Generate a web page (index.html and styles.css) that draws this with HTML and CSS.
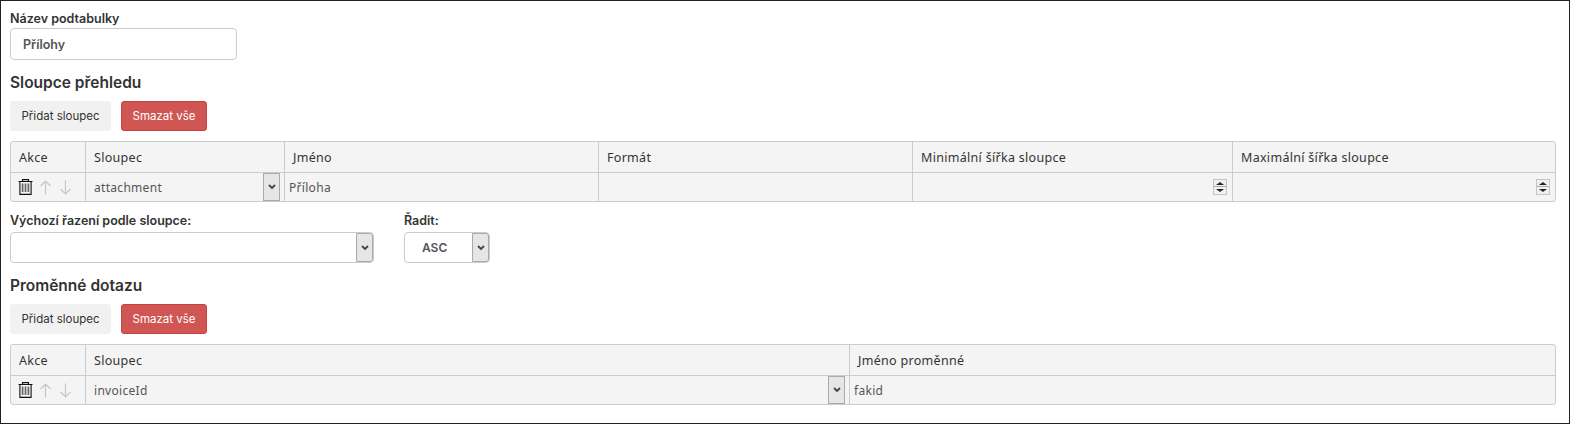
FILE: index.html
```html
<!DOCTYPE html>
<html lang="cs">
<head>
    <meta charset="UTF-8">
    <title>Podtabulka</title>
    <link rel="stylesheet" href="styles.css">
</head>
<body>
    <div class="frame">
        <label class="field-label">Název podtabulky</label>
        <input class="name-input" type="text" value="Přílohy">

        <h2>Sloupce přehledu</h2>
        <div class="buttons">
            <button class="btn">Přidat sloupec</button>
            <button class="btn btn-danger">Smazat vše</button>
        </div>

        <table class="grid grid-columns">
            <tr>
                <th class="col-actions">Akce</th>
                <th class="col-source">Sloupec</th>
                <th class="col-name">Jméno</th>
                <th class="col-format">Formát</th>
                <th class="col-min">Minimální šířka sloupce</th>
                <th>Maximální šířka sloupce</th>
            </tr>
            <tr>
                <td class="actions">
                    <div class="action-icons">
                        <svg class="icon-trash" width="15" height="16" viewBox="0 0 15 16"><path d="M.5 2.500h14M4.500 2.500V.6h6v1.900M1.900 2.500V15.400h11.200V2.500" fill="none" stroke="#111" stroke-width="1.100"/><path d="M4.600 4.500v8.500M7.500 4.500v8.500M10.400 4.500v8.500" fill="none" stroke="#666" stroke-width="1.700"/></svg>
                        <svg class="icon-arrow" width="11" height="15" viewBox="0 0 11 15"><path d="M5.500 14.500V1M.5 6 5.500 1l5 5" fill="none" stroke="#c6c6c6" stroke-width="1.200"/></svg>
                        <svg class="icon-arrow" width="11" height="15" viewBox="0 0 11 15"><path d="M5.500 .5V14M.5 9l5 5 5-5" fill="none" stroke="#c6c6c6" stroke-width="1.200"/></svg>
                    </div>
                </td>
                <td class="has-select">attachment<span class="arrow-box"><svg width="8" height="6" viewBox="0 0 8 6"><path d="M1 1l3 3 3-3" fill="none" stroke="#444" stroke-width="1.800"/></svg></span></td>
                <td class="small-pad">Příloha</td>
                <td></td>
                <td class="has-spin"><span class="spin"><i class="up"></i><i class="down"></i></span></td>
                <td class="has-spin"><span class="spin"><i class="up"></i><i class="down"></i></span></td>
            </tr>
        </table>

        <div class="sort-row">
            <div class="sort-col">
                <label class="field-label">Výchozí řazení podle sloupce:</label>
                <div class="select select-wide"><span class="arrow-box"><svg width="8" height="6" viewBox="0 0 8 6"><path d="M1 1l3 3 3-3" fill="none" stroke="#444" stroke-width="1.800"/></svg></span></div>
            </div>
            <div class="sort-col">
                <label class="field-label">Řadit:</label>
                <div class="select select-order">ASC<span class="arrow-box"><svg width="8" height="6" viewBox="0 0 8 6"><path d="M1 1l3 3 3-3" fill="none" stroke="#444" stroke-width="1.800"/></svg></span></div>
            </div>
        </div>

        <h2>Proměnné dotazu</h2>
        <div class="buttons">
            <button class="btn">Přidat sloupec</button>
            <button class="btn btn-danger">Smazat vše</button>
        </div>

        <table class="grid">
            <tr>
                <th class="col-actions">Akce</th>
                <th class="col-query">Sloupec</th>
                <th>Jméno proměnné</th>
            </tr>
            <tr>
                <td class="actions">
                    <div class="action-icons">
                        <svg class="icon-trash" width="15" height="16" viewBox="0 0 15 16"><path d="M.5 2.500h14M4.500 2.500V.6h6v1.900M1.900 2.500V15.400h11.200V2.500" fill="none" stroke="#111" stroke-width="1.100"/><path d="M4.600 4.500v8.500M7.500 4.500v8.500M10.400 4.500v8.500" fill="none" stroke="#666" stroke-width="1.700"/></svg>
                        <svg class="icon-arrow" width="11" height="15" viewBox="0 0 11 15"><path d="M5.500 14.500V1M.5 6 5.500 1l5 5" fill="none" stroke="#c6c6c6" stroke-width="1.200"/></svg>
                        <svg class="icon-arrow" width="11" height="15" viewBox="0 0 11 15"><path d="M5.500 .5V14M.5 9l5 5 5-5" fill="none" stroke="#c6c6c6" stroke-width="1.200"/></svg>
                    </div>
                </td>
                <td class="has-select">invoiceId<span class="arrow-box"><svg width="8" height="6" viewBox="0 0 8 6"><path d="M1 1l3 3 3-3" fill="none" stroke="#444" stroke-width="1.800"/></svg></span></td>
                <td class="small-pad">fakid</td>
            </tr>
        </table>
    </div>
</body>
</html>
```

FILE: styles.css
```css
body {
    margin: 0;
    background: #fff;
    font-family: 'Inter', 'Liberation Sans', sans-serif;
    color: #333;
}
.frame {
    box-sizing: border-box;
    width: 1570px;
    height: 424px;
    border: 1px solid #222;
    padding: 10px 13px 0 9px;
}
.field-label {
    display: block;
    font-size: 12.5px;
    font-weight: 600;
    line-height: 16px;
    color: #333;
}
.name-input {
    display: block;
    box-sizing: border-box;
    width: 227px;
    height: 32px;
    margin-top: 1px;
    padding: 0 12px;
    border: 1px solid #ccc;
    border-radius: 4px;
    font-family: inherit;
    font-size: 12.5px;
    font-weight: 600;
    color: #555;
}
h2 {
    margin: 13px 0 8px;
    font-size: 15.5px;
    font-weight: 600;
    line-height: 20px;
    color: #333;
}
.buttons {
    display: flex;
    gap: 10px;
    height: 30px;
}
.btn {
    padding: 0 10.5px;
    border: 1px solid #f1f1f1;
    border-radius: 3px;
    background: #f1f1f1;
    font-family: inherit;
    font-size: 11.5px;
    color: #333;
}
.btn-danger {
    background: #d05654;
    border-color: #c9403e;
    color: #fff;
}
.grid {
    width: 100%;
    margin-top: 10px;
    border-collapse: separate;
    border-spacing: 0;
    border: 1px solid #ccc;
    border-radius: 3px;
    table-layout: fixed;
    background: #f4f4f4;
    font-family: 'Noto Sans', sans-serif;
    font-size: 12px;
    letter-spacing: 0.3px;
    color: #555;
}
.grid th {
    box-sizing: border-box;
    height: 31px;
    padding: 0 8px;
    border-bottom: 1px solid #ccc;
    border-left: 1px solid #ccc;
    text-align: left;
    font-weight: 400;
    font-size: 12.5px;
    color: #333;
}
.grid td {
    box-sizing: border-box;
    position: relative;
    height: 28px;
    padding: 0 8px;
    border-left: 1px solid #ccc;
}
.grid th:first-child,
.grid td:first-child {
    border-left: none;
}
.col-actions { width: 74px; }
.col-source { width: 199px; }
.col-name { width: 314px; }
.col-format { width: 314px; }
.col-min { width: 320px; }
.col-query { width: 764px; }
.grid td.actions {
    padding: 0 0 0 7px;
}
.grid td.small-pad {
    padding-left: 4px;
}
.action-icons {
    display: flex;
    align-items: center;
    gap: 9px;
}
.icon-trash {
    margin-right: -2px;
}
.arrow-box {
    position: absolute;
    top: 0;
    right: 4px;
    display: flex;
    align-items: center;
    justify-content: center;
    box-sizing: border-box;
    width: 17px;
    height: 28px;
    border: 1px solid #aaa;
    background: #e6e6e6;
}
.has-spin .spin {
    position: absolute;
    top: 6px;
    right: 5px;
    width: 14px;
    height: 16px;
    border: 1px solid #c4c4c4;
    box-sizing: border-box;
    background: #f0f0f0;
}
.spin::after {
    content: "";
    position: absolute;
    top: 6px;
    left: 0;
    right: 0;
    border-top: 1px solid #aaa;
}
.spin .up,
.spin .down {
    position: absolute;
    left: 2px;
    border-left: 4px solid transparent;
    border-right: 4px solid transparent;
}
.spin .up {
    top: 2px;
    border-bottom: 3px solid #222;
}
.spin .down {
    bottom: 2px;
    border-top: 3px solid #222;
}
.sort-row {
    display: flex;
    gap: 30px;
    margin-top: 11px;
}
.select {
    position: relative;
    box-sizing: border-box;
    height: 31px;
    margin-top: 3px;
    border: 1px solid #ccc;
    border-radius: 4px;
    font-size: 12px;
    font-weight: 600;
    line-height: 29px;
    color: #555;
}
.select-wide { width: 364px; }
.select-order {
    width: 86px;
    padding-left: 17px;
}
.select .arrow-box {
    right: 0;
    height: 29px;
    border-radius: 0 3px 3px 0;
}
```
